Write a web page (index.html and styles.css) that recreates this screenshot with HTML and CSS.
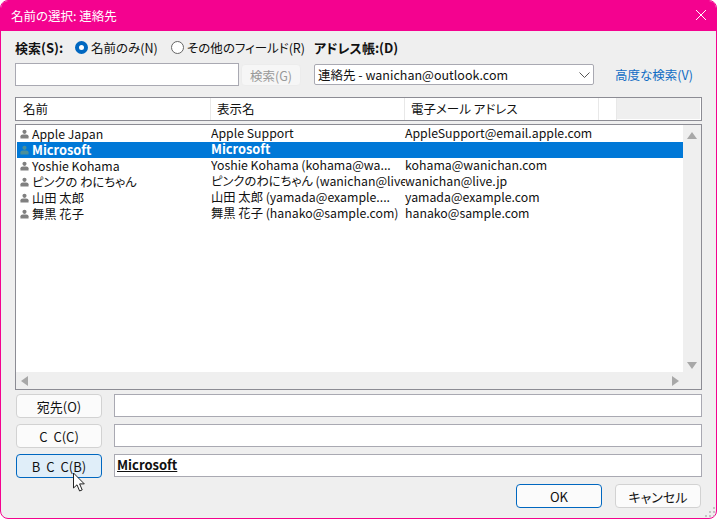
FILE: index.html
```html
<!DOCTYPE html>
<html lang="ja">
<head>
<meta charset="utf-8">
<title>名前の選択: 連絡先</title>
<link rel="stylesheet" href="styles.css">
</head>
<body>
<div class="window">
  <header class="titlebar">
    <span class="title">名前の選択: 連絡先</span>
    <svg class="close" width="12" height="12" viewBox="0 0 12 12"><path d="M1 1L11 11M11 1L1 11" stroke="#fff" stroke-width="1" fill="none"/></svg>
  </header>
  <main class="content">
    <div class="labels">
      <span class="label-search">検索(S):</span>
      <span class="radio radio-on"></span><span class="radio-text first">名前のみ(N)</span>
      <span class="radio"></span><span class="radio-text second">その他のフィールド(R)</span>
      <span class="label-book">アドレス帳:(D)</span>
    </div>
    <div class="search-row">
      <div class="field search-field"></div>
      <div class="btn search-btn">検索(G)</div>
      <div class="combo">
        <span>連絡先 - wanichan@outlook.com</span>
        <svg width="11" height="6" viewBox="0 0 11 6"><path d="M.5.5L5.5 5.5L10.5.5" stroke="#555" fill="none"/></svg>
      </div>
      <span class="link">高度な検索(V)</span>
    </div>
    <div class="header">
      <div class="hcell h1">名前</div>
      <div class="hcell h2">表示名</div>
      <div class="hcell h3">電子メール アドレス</div>
      <div class="hcell h4"></div>
    </div>
    <div class="list">
      <div class="list-main">
        <div class="rows">
          <div class="row"><span class="c1"><svg class="person" viewBox="0 0 10 10"><circle cx="5" cy="2.6" r="2.3"/><path d="M0.5 10V7.5Q0.5 5.6 3 5.6H7Q9.5 5.6 9.5 7.5V10Z"/></svg>Apple Japan</span><span class="c2">Apple Support</span><span class="c3">AppleSupport@email.apple.com</span></div>
          <div class="row selected"><span class="c1"><svg class="person" viewBox="0 0 10 10"><circle cx="5" cy="2.6" r="2.3"/><path d="M0.5 10V7.5Q0.5 5.6 3 5.6H7Q9.5 5.6 9.5 7.5V10Z"/></svg>Microsoft</span><span class="c2">Microsoft</span><span class="c3"></span></div>
          <div class="row"><span class="c1"><svg class="person" viewBox="0 0 10 10"><circle cx="5" cy="2.6" r="2.3"/><path d="M0.5 10V7.5Q0.5 5.6 3 5.6H7Q9.5 5.6 9.5 7.5V10Z"/></svg>Yoshie Kohama</span><span class="c2">Yoshie Kohama (kohama@wa...</span><span class="c3">kohama@wanichan.com</span></div>
          <div class="row"><span class="c1"><svg class="person" viewBox="0 0 10 10"><circle cx="5" cy="2.6" r="2.3"/><path d="M0.5 10V7.5Q0.5 5.6 3 5.6H7Q9.5 5.6 9.5 7.5V10Z"/></svg>ピンクの わにちゃん</span><span class="c2">ピンクのわにちゃん (wanichan@live...</span><span class="c3">wanichan@live.jp</span></div>
          <div class="row"><span class="c1"><svg class="person" viewBox="0 0 10 10"><circle cx="5" cy="2.6" r="2.3"/><path d="M0.5 10V7.5Q0.5 5.6 3 5.6H7Q9.5 5.6 9.5 7.5V10Z"/></svg>山田 太郎</span><span class="c2">山田 太郎 (yamada@example....</span><span class="c3">yamada@example.com</span></div>
          <div class="row"><span class="c1"><svg class="person" viewBox="0 0 10 10"><circle cx="5" cy="2.6" r="2.3"/><path d="M0.5 10V7.5Q0.5 5.6 3 5.6H7Q9.5 5.6 9.5 7.5V10Z"/></svg>舞黒 花子</span><span class="c2">舞黒 花子 (hanako@sample.com)</span><span class="c3">hanako@sample.com</span></div>
        </div>
        <div class="vscroll">
          <svg width="10" height="7" viewBox="0 0 10 7"><path d="M5 0L10 7H0Z" fill="#a8a8a8"/></svg>
          <svg width="10" height="7" viewBox="0 0 10 7"><path d="M5 7L10 0H0Z" fill="#a8a8a8"/></svg>
        </div>
      </div>
      <div class="hscroll">
        <svg width="7" height="10" viewBox="0 0 7 10"><path d="M0 5L7 0V10Z" fill="#a8a8a8"/></svg>
        <svg width="7" height="10" viewBox="0 0 7 10"><path d="M7 5L0 0V10Z" fill="#a8a8a8"/></svg>
      </div>
    </div>
    <div class="recipients">
      <div class="btn rbtn">宛先(O)</div><div class="field rfield"></div>
      <div class="btn rbtn">C C(C)</div><div class="field rfield"></div>
      <div class="btn rbtn active">B C C(B)</div><div class="field rfield"><span class="resolved">Microsoft</span></div>
    </div>
    <div class="footer">
      <div class="btn fbtn primary">OK</div>
      <div class="btn fbtn">キャンセル</div>
    </div>
  </main>
  <svg class="cursor" width="14" height="21" viewBox="0 0 14 21"><path d="M1.5 1V16L5 12.8L7.6 19L10.2 17.9L7.6 11.9H12.3Z" fill="#fff" stroke="#222" stroke-width="1"/></svg>
  <svg class="grip" width="11" height="11" viewBox="0 0 11 11"><path d="M8 0h2v2H8zM4 4h2v2H4zM8 4h2v2H8zM0 8h2v2H0zM4 8h2v2H4zM8 8h2v2H8z" fill="#c4c4c4"/></svg>
</div>
</body>
</html>
```

FILE: styles.css
```css
* { box-sizing: border-box; }
html, body { margin: 0; padding: 0; background: #fff; }
body { font-family: "Noto Sans CJK JP", "Noto Sans", sans-serif; font-size: 12px; color: #111; font-feature-settings: "palt"; }
.window { position: relative; width: 717px; height: 519px; background: #efefef; border: 1px solid #f4028f; border-radius: 8px; overflow: hidden; display: flex; flex-direction: column; }
.titlebar { background: #f4028f; color: #fff; display: flex; align-items: center; justify-content: space-between; padding: 0 9px 0 11px; flex: none; margin: -1px -1px 0; height: 31px; }
.title { font-size: 12.5px; line-height: 31px; }
.close { margin-top: -1px; margin-right: 1px; }
.content { padding: 0 14px; display: flex; flex-direction: column; flex: 1; }
.labels { height: 32px; display: flex; align-items: center; padding-top: 1px; white-space: nowrap; }
.label-search { font-weight: 700; font-size: 13px; width: 60px; }
.label-book { font-weight: 700; font-size: 13px; }
.radio { width: 13px; height: 13px; border-radius: 50%; border: 1px solid #666; background: #fff; flex: none; }
.radio-on { border: 4px solid #0067c0; }
.radio-text { margin-left: 3px; font-size: 12.5px; }
.first { width: 80px; }
.second { width: 127px; }
.search-row { display: flex; align-items: flex-start; height: 34px; }
.field { background: #fff; border: 1px solid #a9a9b2; }
.search-field { width: 224px; height: 23px; }
.btn { border-radius: 4px; border: 1px solid #d2d2d2; background: #fbfbfb; display: flex; align-items: center; justify-content: center; font-size: 13px; }
.search-btn { width: 60px; height: 22px; margin: 1px 0 0 2px; background: #f6f6f6; border-color: #ececec; color: #999; font-size: 12.5px; }
.combo { width: 280px; height: 21px; margin: 1px 0 0 13px; background: #fff; border: 1px solid #a9a9b2; border-radius: 2px; display: flex; align-items: center; justify-content: space-between; padding: 0 3px; font-size: 12.5px; }
.link { margin: 2px 0 0 21px; color: #0f6cc4; white-space: nowrap; font-size: 12.5px; }
.header { display: flex; width: 687px; height: 24px; border: 1px solid #8c8c94; background: #fff; flex: none; font-size: 12.5px; }
.hcell { height: 100%; padding-left: 7px; line-height: 22px; border-right: 1px solid #e8e8e8; white-space: nowrap; }
.h1 { width: 195px; }
.h2 { width: 194px; padding-left: 6px; }
.h3 { width: 194px; padding-left: 6px; }
.h4 { width: 18px; }
.header::after { content: ""; flex: 1; background: #efefef; margin: 0 1px 1px 0; }
.list { width: 687px; height: 266px; margin-top: 3px; border: 1px solid #8c8c94; background: #fff; display: flex; flex-direction: column; flex: none; }
.list-main { flex: 1; display: flex; min-height: 0; }
.rows { flex: 1; padding: 1px 0 0 1px; }
.row { height: 16px; display: flex; line-height: 14px; font-size: 12.3px; white-space: nowrap; }
.row.selected { background: #0078d7; color: #fff; font-weight: 700; font-size: 12.8px; }
.c1 { width: 194px; display: flex; align-items: center; flex: none; padding-left: 3px; }
.c2 { width: 194px; flex: none; overflow: hidden; }
.c3 { flex: 1; }
.person { width: 9px; height: 10px; fill: #808080; margin-right: 3px; flex: none; }
.selected .person { fill: #4a8f9a; }
.vscroll { width: 18px; background: #efefef; display: flex; flex-direction: column; justify-content: space-between; align-items: center; padding: 7px 0 3px; flex: none; }
.hscroll { height: 17px; background: #efefef; display: flex; justify-content: space-between; align-items: center; padding: 0 22px 0 5px; flex: none; }
.recipients { display: grid; grid-template-columns: 86px 588px; column-gap: 12px; row-gap: 6px; margin-top: 4px; margin-left: 1px; grid-auto-rows: 24px; }
.rfield { height: 23px; }
.rbtn { word-spacing: 3px; }
.rbtn.active { background: #e0eef9; border-color: #0067c0; }
.resolved { font-weight: 700; font-size: 13px; text-decoration: underline; padding-left: 2px; line-height: 19px; display: block; color: #111; }
.footer { display: flex; justify-content: flex-end; gap: 13px; margin-top: 6px; padding-right: 1px; }
.fbtn { width: 86px; height: 24px; }
.fbtn.primary { border-color: #0067c0; }
.cursor { position: absolute; left: 71px; top: 471px; }
.grip { position: absolute; right: 0; bottom: 0; }
```
